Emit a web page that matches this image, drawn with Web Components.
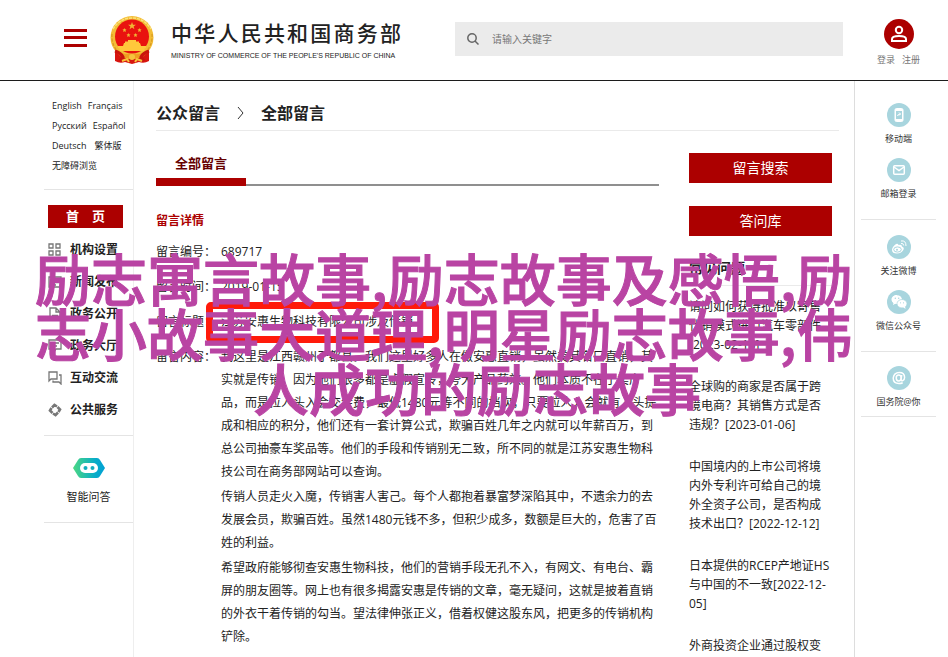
<!DOCTYPE html>
<html lang="zh-CN">
<head>
<meta charset="utf-8">
<meta name="viewport" content="width=device-width, initial-scale=1">
<title>全部留言 - 中华人民共和国商务部</title>
<style>
html { --red: #ac0000; --line: #e4e4e4; --ink: #222; }
body { margin: 0; background: #fff; color: var(--ink); font: 12px/20px "Open Sans", "Noto Sans CJK SC", sans-serif; }
</style>
</head>
<body>
<ministry-page></ministry-page>
<script>
const define = (name, html) => {
  const t = document.createElement('template');
  t.innerHTML = `<style>*,::after{box-sizing:border-box}a{color:inherit;text-decoration:none}svg{display:block}</style>` + html;
  customElements.define(name, class extends HTMLElement {
    constructor() { super(); this.attachShadow({ mode: 'open' }).append(t.content.cloneNode(true)); }
  });
};

define('national-emblem', `
<style>:host{display:block;width:44px;flex:none}</style>
<svg viewBox="0 0 44 48" width="44" height="48" aria-hidden="true">
  <path d="M5 33 5 45q5 3 10 1l7 2 7-2q5 2 10-1l0-12z" fill="#d8150f"/>
  <ellipse cx="22" cy="21.500" rx="21.500" ry="21.500" fill="#f3bd35"/>
  <path d="M3 13Q10 2 22 2t19 11" fill="none" stroke="#fbe07a" stroke-width="1.500" stroke-dasharray="3 1"/>
  <path d="M2 18q-1 13 9 20M42 18q1 13-9 20" fill="none" stroke="#d99a20" stroke-width="1.200" stroke-dasharray="3 1.500"/>
  <circle cx="22" cy="20.500" r="17" fill="#e9130f"/>
  <path d="m22 6 1 2.700h2.900l-2.300 1.700.8 2.800-2.400-1.700-2.400 1.700.8-2.800-2.300-1.700H21zM14.500 12l.6 1.300 1.400.1-1 1 .3 1.500-1.300-.7-1.300.7.3-1.500-1-1 1.400-.1zM29.500 12l.6 1.300 1.400.1-1 1 .3 1.500-1.300-.7-1.300.7.3-1.500-1-1 1.400-.1zM18.500 17l.6 1.300 1.400.1-1 1 .3 1.500-1.300-.7-1.300.7.3-1.500-1-1 1.400-.1zM25.500 17l.6 1.300 1.400.1-1 1 .3 1.500-1.300-.7-1.300.7.3-1.500-1-1 1.400-.1z" fill="#f0b634"/>
  <path d="M15 27h14v-1.500h-3V24h-8v1.500h-3zM14 27h16l1 3h5v2H8v-2h5zM9 32h26l-1 3H10z" fill="#ffc83b"/>
  <path d="m8 36 7 2h14l7-2-2 4-8 3h-8l-8-3z" fill="#ef9f22"/>
  <path d="M5 35q6 2 8 6l-3 4M39 35q-6 2-8 6l3 4" fill="none" stroke="#c9140c" stroke-width="3"/>
  <path d="m12 45 5-2 2 3M32 45l-5-2-2 3" stroke="#f8c53c" stroke-width="2" fill="none"/>
  <circle cx="22" cy="41" r="3" fill="#f6c43d"/>
</svg>`);

define('site-header', `
<style>
:host{display:flex;align-items:center;height:81px;border-bottom:1px solid #1c1c1c;padding:0 28px 0 64px}
.menu{width:23px;height:18px;padding:0;border:0;background:linear-gradient(var(--red) 0 3px,#fff 3px 7px,var(--red) 7px 10px,#fff 10px 15px,var(--red) 15px);margin:0 23px 4px 0;flex:none}
.brand{display:flex;align-items:center;gap:17px;flex:none}
.name{display:grid;width:230px;row-gap:4px;padding-top:4px;color:#222}
b{font:500 21px/24px "Noto Sans CJK SC",sans-serif;text-align:justify;text-align-last:justify;white-space:nowrap}
small{font:7px/16px "Liberation Sans",sans-serif;white-space:nowrap}
form{flex:1;display:flex;align-items:center;height:34px;margin:0 34px 3px 54px;background:#ebebeb;padding-left:12px}
form button{border:0;padding:0;background:none;width:12px;height:12px;margin-right:13px}
input{flex:1;min-width:0;border:0;outline:0;background:none;font:10px/20px "Open Sans","Noto Sans CJK SC",sans-serif;padding:0}
input::placeholder{color:#777;opacity:1}
.user{width:43px;display:grid;justify-items:center;gap:3px;color:#777;font-size:9px;line-height:16px;padding-top:7px}
.user div{display:flex;gap:7px;white-space:nowrap}
</style>
<button class="menu" aria-label="菜单"></button>
<a class="brand" href="#"><national-emblem></national-emblem><span class="name"><b>中华人民共和国商务部</b><small>MINISTRY OF COMMERCE OF THE PEOPLE'S REPUBLIC OF CHINA</small></span></a>
<form><button type="button" aria-label="搜索"><svg viewBox="0 0 12 12" width="12" height="12" fill="none" stroke="#666" stroke-width="1.500"><circle cx="5" cy="5" r="4.200"/><path d="m8 8 3.500 3.500"/></svg></button><input type="text" aria-label="请输入关键字" placeholder="请输入关键字"></form>
<div class="user"><svg viewBox="0 0 30 30" width="30" height="30"><circle cx="15" cy="15" r="15" fill="var(--red)"/><g fill="none" stroke="#fff" stroke-width="2"><circle cx="15" cy="11" r="3.200"/><path d="M8 22v-2q0-3 7-3t7 3v2z"/></g></svg><div><a href="#">登录</a><a href="#">注册</a></div></div>`);

define('nav-item', `
<style>:host{display:block;height:32px}a{display:flex;align-items:center;height:32px;gap:8px;font-weight:700;white-space:nowrap}::slotted(svg){width:14px;height:14px;flex:none}</style>
<a href="#"><slot name="icon"></slot><span><slot></slot></span></a>`);

const g = 'slot="icon" viewBox="0 0 14 14" fill="none" stroke="#777" stroke-width="1.300"';
define('side-nav', `
<style>
:host{display:block;border-right:1px solid #eee;padding-left:44px}
section{border-bottom:1px solid var(--line)}
.lang{padding:15px 0 13px 8px;font-size:9px;line-height:20px;color:#222;white-space:nowrap}
.lang div{display:flex;gap:6px}
.lang .wide{gap:8px}
nav{padding:15px 10px 9px 4px}
.home{display:flex;justify-content:center;gap:13px;background:var(--red);color:#fff;font-weight:700;font-size:13px;line-height:23px;margin-bottom:6px}
.bot{padding:22px 0 15px;text-align:center;font-size:11px}
.bot a{display:grid;justify-items:center;gap:9px}
</style>
<section class="lang">
<div><a href="#">English</a><a href="#">Français</a></div><div><a href="#">Русский</a><a href="#">Español</a></div><div class="wide"><a href="#">Deutsch</a><a href="#">繁体版</a></div><div><a href="#">无障碍浏览</a></div></section>
<section><nav><a class="home" href="#"><span>首</span><span>页</span></a>
<nav-item><svg ${g}><path d="M1 1h4v4H1zM8 1h4v4H8zM1 8h4v4H1zM8 8h4v4H8z"/></svg>机构设置</nav-item>
<nav-item><svg ${g}><path d="M1 2h12v10H1zM3 5h8M3 7.500h8M3 10h5"/></svg>新闻发布</nav-item>
<nav-item><svg ${g}><path d="M2 1h6l4 4v8H2zM8 1v4h4M4 8.500h6"/></svg>政务公开</nav-item>
<nav-item><svg ${g}><path d="M1 1h12v9H8l-2 3v-3H1zM3 4h8M3 7h6"/></svg>政务大厅</nav-item>
<nav-item><svg ${g}><path d="M1 1h8v7H3L1 10zM11 4h2v9l-2-2H5V9.500"/></svg>互动交流</nav-item>
<nav-item><svg slot="icon" viewBox="0 0 14 14" fill="none" stroke="#777" stroke-width="3"><path d="M4 4.500 6.500 2 9 3.500M9.500 4 12 6.500 10.500 9M10 9.500 7.500 12 5 10.500M4.500 10 2 7.500 3.500 5" stroke-width="2.600"/></svg>公共服务</nav-item>
</nav></section>
<section class="bot"><a href="#"><svg viewBox="0 0 32 20" width="32" height="20"><defs><linearGradient id="r"><stop stop-color="#4bd783"/><stop offset=".7" stop-color="#08acc9"/><stop offset="1" stop-color="#00a0d5"/></linearGradient></defs><path d="M8 0h16q2 0 3 2l5 8-5 8q-1 2-3 2H8q-2 0-3-2L0 10l5-8q1-2 3-2z" fill="url(#r)"/><rect x="7" y="5" width="18" height="10" rx="5" fill="#fff"/><circle cx="12.500" cy="10" r="2" fill="#12adbe"/><circle cx="19.500" cy="10" r="2" fill="#12adbe"/></svg>智能问答</a></section>`);

define('bread-crumb', `
<style>:host{display:flex;align-items:center;gap:17px;height:50px;box-sizing:border-box;padding-top:15px;border-bottom:1px solid #eaeaea;font-size:16px;font-weight:700}svg{flex:none}</style>
<a href="#"><slot name="parent"></slot></a><svg viewBox="0 0 7 12" width="7" height="12" fill="none" stroke="#333"><path d="m1 0 5 6-5 6"/></svg><a href="#"><slot></slot></a>`);

define('message-detail', `
<style>
:host{display:block}
.tabs{border-bottom:2px solid #8f8f8f;height:34px;display:flex}
.tabs a{width:90px;height:34px;border-bottom:8px solid var(--red);color:#600;font-size:13px;font-weight:700;text-align:center;line-height:22px}
h2{margin:25px 0 9px;font-size:12px;line-height:20px;color:var(--red)}
dl{margin:0;display:grid;grid-template-columns:65px 1fr;row-gap:12px;line-height:23px}
dt{white-space:nowrap}dd{margin:0}p{margin:0 0 2px}
.title{position:relative}
.title::after{content:"";position:absolute;left:-15px;top:-8px;width:233px;height:41px;border:7px solid #ff1a0a;border-radius:5px}
</style>
<div class="tabs"><a href="#">全部留言</a></div>
<h2>留言详情</h2>
<dl><dt>留言编号：</dt><dd>689717</dd><dt>留言时间：</dt><dd>2019-01-15</dd><dt>留言标题：</dt><dd class="title">江苏安惠生物科技有限公司涉及传销</dd>
<dt>留言内容：</dt><dd><p>我这里是江西赣州于都县。我们这里好多人在做安惠直销，虽然美其名曰直销，其实就是传销，因为他们很多都是虚假宣传，夸大产品药效。他们本质不在于卖产品，而是拉人头入会交会费，最低1480元等不同的档次，只要拉人入会就有人头提成和相应的积分，他们还有一套计算公式，欺骗百姓几年之内就可以年薪百万，到总公司抽豪车奖品等。他们的手段和传销别无二致，所不同的就是江苏安惠生物科技公司在商务部网站可以查询。</p><p>传销人员走火入魔，传销害人害己。每个人都抱着暴富梦深陷其中，不遗余力的去发展会员，欺骗百姓。虽然1480元钱不多，但积少成多，数额是巨大的，危害了百姓的利益。</p><p>希望政府能够彻查安惠生物科技，他们的营销手段无孔不入，有网文、有电台、霸屏的朋友圈等。网上也有很多揭露安惠是传销的文章，毫无疑问，这就是披着直销的外衣干着传销的勾当。望法律伸张正义，借着权健这股东风，把更多的传销机构铲除。</p></dd></dl>`);

define('faq-panel', `
<style>
:host{display:block}
.btn{display:block;width:100%;height:30px;margin-bottom:23px;border:0;padding:0;background:var(--red);color:#fff;font:14px/30px "Open Sans","Noto Sans CJK SC",sans-serif}
h2{margin:0;font-size:14px;line-height:24px;padding:0 0 5px;margin-top:-3px;border-bottom:1px solid #eaeaea}
ul{list-style:none;margin:11px 0 0;padding:0;display:grid;gap:23px;line-height:19px}
</style>
<button class="btn">留言搜索</button><button class="btn">答问库</button>
<h2>常见问题</h2>
<ul><li><a href="#">请问如何获得批准以寄售代销模式进口汽车零部件[2023-02-15]</a></li><li><a href="#">全球购的商家是否属于跨境电商？其销售方式是否违规？[2023-01-06]</a></li><li><a href="#">中国境内的上市公司将境内外专利许可给自己的境外全资子公司，是否构成技术出口？[2022-12-12]</a></li><li><a href="#">日本提供的RCEP产地证HS与中国的不一致[2022-12-05]</a></li><li><a href="#">外商投资企业通过股权变</a></li></ul>`);

define('rail-item', `
<style>:host{display:block}a{display:grid;justify-items:center;gap:4px;font-size:9px;line-height:16px;color:#333;white-space:nowrap}::slotted(svg){width:24px;height:24px;border-radius:50%;background:#a8d5de}</style>
<a href="#"><slot name="icon"></slot><span><slot></slot></span></a>`);

const c = 'slot="icon" viewBox="0 0 24 24" fill="none" stroke="#fff"';
define('tool-rail', `
<style>:host{display:block;border-left:1px solid #ddd;padding:0 12px 0 6px}section{display:grid;gap:11px;padding:15px 0 17px;border-bottom:1px solid var(--line)}section:first-of-type{padding-top:22px}section:last-child{padding:14px 0 6px}</style>
<section>
<rail-item><svg ${c}><rect x="8" y="5.500" width="8" height="13" rx="1.500" fill="#fff"/><path fill="#a8d5de" stroke="none" d="M9 8h6v8H9z"/><path d="M10.500 13q0-2 3-2m-1.500-1.500 1.500 1.500-1.500 1.500"/></svg>移动端</rail-item>
<rail-item><svg ${c}><rect x="6.700" y="7.700" width="10.600" height="8.600" rx="1" stroke-width="1.500"/><path d="m7 9 5 3.500L17 9" stroke-width="1.500"/></svg>邮箱登录</rail-item>
</section>
<section>
<rail-item><svg ${c}><path d="M5 15q0-3 4-6 2-1 2.500 1 3.500-1 3.500 1.500 3 1 1 4-2 3-6 3-5 0-5-3.500z" fill="#fff" stroke="none"/><ellipse cx="10.500" cy="14.500" rx="3.800" ry="2.600" stroke="#a8d5de"/><circle cx="10" cy="14.700" r="1" fill="#a8d5de" stroke="none"/><path d="M14 6q5-1 5 5M14 8.500q2.500-.5 2.700 2"/></svg>关注微博</rail-item>
<rail-item><svg ${c}><path d="M10 5c-3 0-5.500 2-5.500 4.500 0 1.500.8 2.600 2 3.400L6 15l2.300-1.200 2 .2z" fill="#fff" stroke="none"/><ellipse cx="10" cy="9.500" rx="5" ry="4.300" fill="#fff" stroke="none"/><ellipse cx="15" cy="13.700" rx="5" ry="4.200" fill="#fff" stroke="#a8d5de" stroke-width=".7"/><path d="m16 17 2.500 2-.5-3z" fill="#fff" stroke="none"/><g fill="#a8d5de" stroke="none"><circle cx="8.300" cy="8.300" r=".7"/><circle cx="11.700" cy="8.300" r=".7"/><circle cx="13.500" cy="12.800" r=".6"/><circle cx="16.500" cy="12.800" r=".6"/></g></svg>微信公众号</rail-item>
</section>
<section>
<rail-item><svg ${c} stroke-width="1.500"><ellipse cx="11.700" cy="12" rx="2.500" ry="2.900"/><path d="m14.700 9-.6 4.500q0 1.500 1.500 1.200 2-.7 2-3.200 0-5-5.300-5T6.200 12q0 5.500 5.800 5.500 2 0 3.700-.8"/></svg>国务院@你</rail-item>
</section>`);

define('caption-overlay', `
<style>:host{position:absolute;left:35px;right:29px;top:249px;pointer-events:none;color:#b944a3;-webkit-text-stroke:1px #b944a3;font:500 56px/55px "Noto Sans CJK SC",sans-serif;white-space:nowrap}::slotted(span){display:block;text-align:center}</style>
<slot></slot><slot name="last"></slot>`);

define('ministry-page', `
<style>
:host{display:block;position:relative;min-height:100vh}
.body{display:grid;grid-template-columns:134px minmax(0,1fr) 94px;min-height:calc(100vh - 81px)}
main{padding:0 15px 3px 22px}
.cols{display:grid;grid-template-columns:minmax(0,1fr) 143px;gap:30px;padding-right:7px}
faq-panel{padding-top:22px}
message-detail{padding-top:21px}
</style>
<site-header></site-header>
<div class="body"><side-nav></side-nav><main><bread-crumb><span slot="parent">公众留言</span>全部留言</bread-crumb><div class="cols"><message-detail></message-detail><faq-panel></faq-panel></div></main><tool-rail></tool-rail></div>
<caption-overlay>励志寓言故事,励志故事及感悟,励<br>志小故事大道理,明星励志故事,伟<span slot="last">人成功的励志故事</span></caption-overlay>`);
</script>
</body>
</html>
